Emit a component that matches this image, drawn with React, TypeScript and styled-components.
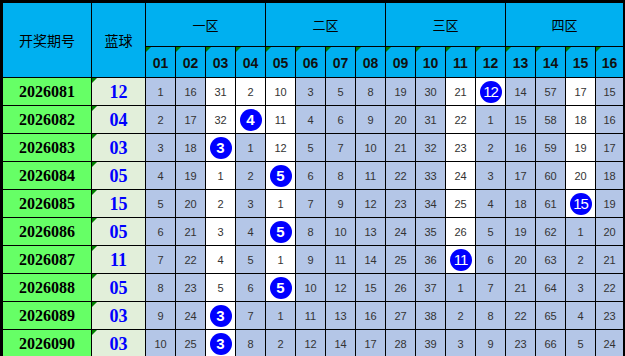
import React from 'react';
import styled, { createGlobalStyle, css } from 'styled-components';

interface Draw {
  period: string;
  blue: number;
  nums: number[];
}

const draws: Draw[] = [
  { period: '2026081', blue: 12, nums: [1, 16, 31, 2, 10, 3, 5, 8, 19, 30, 21, 0, 14, 57, 17, 15] },
  { period: '2026082', blue: 4, nums: [2, 17, 32, 0, 11, 4, 6, 9, 20, 31, 22, 1, 15, 58, 18, 16] },
  { period: '2026083', blue: 3, nums: [3, 18, 0, 1, 12, 5, 7, 10, 21, 32, 23, 2, 16, 59, 19, 17] },
  { period: '2026084', blue: 5, nums: [4, 19, 1, 2, 0, 6, 8, 11, 22, 33, 24, 3, 17, 60, 20, 18] },
  { period: '2026085', blue: 15, nums: [5, 20, 2, 3, 1, 7, 9, 12, 23, 34, 25, 4, 18, 61, 0, 19] },
  { period: '2026086', blue: 5, nums: [6, 21, 3, 4, 0, 8, 10, 13, 24, 35, 26, 5, 19, 62, 1, 20] },
  { period: '2026087', blue: 11, nums: [7, 22, 4, 5, 1, 9, 11, 14, 25, 36, 0, 6, 20, 63, 2, 21] },
  { period: '2026088', blue: 5, nums: [8, 23, 5, 6, 0, 10, 12, 15, 26, 37, 1, 7, 21, 64, 3, 22] },
  { period: '2026089', blue: 3, nums: [9, 24, 0, 7, 1, 11, 13, 16, 27, 38, 2, 8, 22, 65, 4, 23] },
  { period: '2026090', blue: 3, nums: [10, 25, 0, 8, 2, 12, 14, 17, 28, 39, 3, 9, 23, 66, 5, 24] },
];

const zones = ['一区', '二区', '三区', '四区'];

const pad = (n: number) => String(n).padStart(2, '0');

// a cell stays white while its column still comes up as the blue ball further down
const isOpen = (row: number, col: number) =>
  draws.slice(row).some((d) => d.blue === col + 1);

function App() {
  return (
    <>
      <GlobalStyle />
      <Sheet>
        <TitleCell $rows={2}>开奖期号</TitleCell>
        <TitleCell $rows={2}>蓝球</TitleCell>
        {zones.map((z) => (
          <ZoneCell key={z}>{z}</ZoneCell>
        ))}
        {Array.from({ length: 16 }, (_, i) => (
          <NumHead key={i}>{pad(i + 1)}</NumHead>
        ))}

        {draws.map((d, r) => (
          <React.Fragment key={d.period}>
            <PeriodCell>{d.period}</PeriodCell>
            <BlueCell>{pad(d.blue)}</BlueCell>
            {d.nums.map((n, c) => {
              const hit = d.blue === c + 1;
              return (
                <NumCell key={c} $white={hit || isOpen(r, c)}>
                  {hit ? <Ball $wide={d.blue > 9}>{d.blue}</Ball> : n}
                </NumCell>
              );
            })}
          </React.Fragment>
        ))}
      </Sheet>
    </>
  );
}

export default App;

const GlobalStyle = createGlobalStyle`
  html, body {
    margin: 0;
    padding: 0;
    background: #ffffff;
    overflow: hidden;
  }
`;

const Sheet = styled.div`
  width: 625px;
  box-sizing: border-box;
  display: grid;
  grid-template-columns: 88px 53px repeat(15, 29px) 27px;
  grid-template-rows: 43px 30px repeat(10, 27px);
  gap: 1px;
  padding: 3px 2px 2px 3px;
  background: #000000;
`;

const cell = css`
  position: relative;
  display: flex;
  align-items: center;
  justify-content: center;
  overflow: hidden;
`;

const marker = css`
  &::before {
    content: '';
    position: absolute;
    top: 0;
    left: 0;
    border-top: 5px solid #008000;
    border-right: 5px solid transparent;
  }
`;

const TitleCell = styled.div<{ $rows: number }>`
  ${cell};
  grid-row: span ${(p) => p.$rows};
  background: #00b0f0;
  color: #000000;
  font-family: 'Noto Sans CJK SC', sans-serif;
  font-size: 14px;
`;

const ZoneCell = styled.div`
  ${cell};
  grid-column: span 4;
  background: #00b0f0;
  color: #000000;
  font-family: 'Noto Sans CJK SC', sans-serif;
  font-size: 13px;
`;

const NumHead = styled.div`
  ${cell};
  ${marker};
  background: #00b0f0;
  color: #111111;
  font-family: 'Liberation Sans', Arial, sans-serif;
  font-size: 14px;
  font-weight: bold;
  padding-top: 2px;
`;

const PeriodCell = styled.div`
  ${cell};
  background: #66ff66;
  color: #000000;
  font-family: 'Liberation Serif', serif;
  font-size: 16px;
  font-weight: bold;
`;

const BlueCell = styled.div`
  ${cell};
  ${marker};
  background: #e2efda;
  color: #0000ff;
  font-family: 'Liberation Serif', serif;
  font-size: 18px;
  font-weight: bold;
  padding-top: 1px;
`;

const NumCell = styled.div<{ $white: boolean }>`
  ${cell};
  background: ${(p) => (p.$white ? '#ffffff' : '#b4c6e7')};
  color: #333333;
  font-family: 'Liberation Sans', Arial, sans-serif;
  font-size: 11px;
  padding-top: 1px;
`;

const Ball = styled.span<{ $wide: boolean }>`
  width: 22px;
  height: 22px;
  border-radius: 50%;
  background: #0000ff;
  color: #ffffff;
  display: flex;
  align-items: center;
  justify-content: center;
  font-family: 'Liberation Sans', Arial, sans-serif;
  font-size: ${(p) => (p.$wide ? '15px' : '15px')};
  font-weight: ${(p) => (p.$wide ? 'normal' : 'bold')};
  letter-spacing: ${(p) => (p.$wide ? '-1px' : '0')};
  margin-top: -1px;
`;
